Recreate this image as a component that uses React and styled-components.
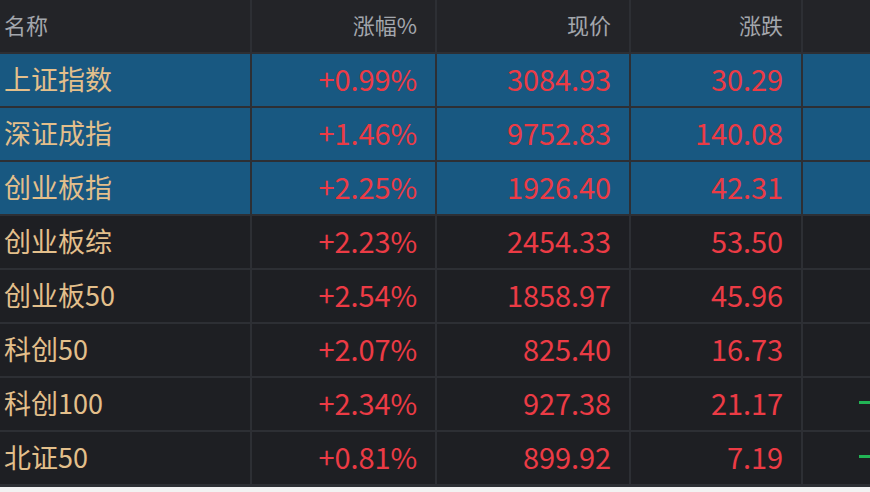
import React from 'react'
import styled, { createGlobalStyle } from 'styled-components'

const GlobalStyle = createGlobalStyle`
  html, body {
    margin: 0;
    padding: 0;
    background: #f2f2f2;
  }
  body {
    font-family: "Noto Sans CJK SC", "Noto Sans", sans-serif;
  }
`

const rows = [
  { name: '上证指数', pct: '+0.99%', price: '3084.93', chg: '30.29', active: true },
  { name: '深证成指', pct: '+1.46%', price: '9752.83', chg: '140.08', active: true },
  { name: '创业板指', pct: '+2.25%', price: '1926.40', chg: '42.31', active: true },
  { name: '创业板综', pct: '+2.23%', price: '2454.33', chg: '53.50' },
  { name: '创业板50', pct: '+2.54%', price: '1858.97', chg: '45.96' },
  { name: '科创50', pct: '+2.07%', price: '825.40', chg: '16.73' },
  { name: '科创100', pct: '+2.34%', price: '927.38', chg: '21.17', down: true },
  { name: '北证50', pct: '+0.81%', price: '899.92', chg: '7.19', down: true },
]

const Table = styled.div`
  display: grid;
  grid-template-columns: 250px 183px 192px 170px 1fr;
  grid-template-rows: 52px repeat(8, 52px);
  row-gap: 2px;
  column-gap: 2px;
  background: #2d2f34;
  padding-bottom: 3px;
  width: 870px;
  overflow: hidden;
`

const Cell = styled.div`
  display: flex;
  align-items: center;
  justify-content: ${({ $left }) => ($left ? 'flex-start' : 'flex-end')};
  padding: ${({ $left }) => ($left ? '0 0 4px 4px' : '0 18px 4px 0')};
  background: ${({ $active }) => ($active ? '#185881' : '#1e1f23')};
  white-space: nowrap;
  overflow: hidden;
`

const HeadCell = styled(Cell)`
  background: #232428;
  color: #a3a7ad;
  font-size: 22px;
  padding-bottom: 4px;
`

const Name = styled.span`
  color: #e3bf8b;
  font-size: 27px;
`

const Num = styled.span`
  color: #ec3b45;
  font-size: 29px;
  letter-spacing: -0.1px;
`

const Extra = styled(Cell)`
  justify-content: flex-start;
  padding: 0 0 4px 56px;
`

const Dash = styled.div`
  width: 14px;
  height: 3px;
  background: #22b455;
`

export default function App() {
  return (
    <>
      <GlobalStyle />
      <Table>
        <HeadCell $left>名称</HeadCell>
        <HeadCell>涨幅%</HeadCell>
        <HeadCell>现价</HeadCell>
        <HeadCell>涨跌</HeadCell>
        <HeadCell />
        {rows.map((r) => (
          <React.Fragment key={r.name}>
            <Cell $left $active={r.active}>
              <Name>{r.name}</Name>
            </Cell>
            <Cell $active={r.active}>
              <Num>{r.pct}</Num>
            </Cell>
            <Cell $active={r.active}>
              <Num>{r.price}</Num>
            </Cell>
            <Cell $active={r.active}>
              <Num>{r.chg}</Num>
            </Cell>
            <Extra $active={r.active}>{r.down && <Dash />}</Extra>
          </React.Fragment>
        ))}
      </Table>
    </>
  )
}
